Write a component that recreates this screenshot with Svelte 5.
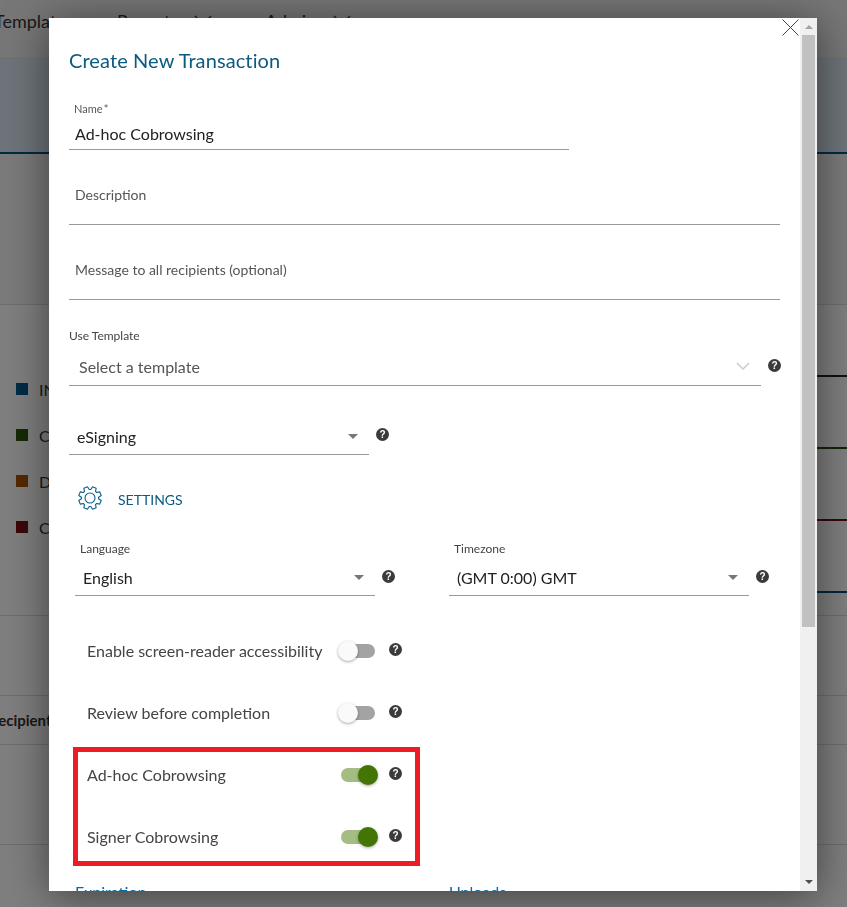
<script>
  let toggles = $state([
    { label: 'Enable screen-reader accessibility', on: false },
    { label: 'Review before completion', on: false }
  ])
  let cobrowse = $state([
    { label: 'Ad-hoc Cobrowsing', on: true },
    { label: 'Signer Cobrowsing', on: true }
  ])

  const legend = [
    { color: '#00568a', text: 'IN PROGRESS' },
    { color: '#2f5208', text: 'COMPLETED' },
    { color: '#a65200', text: 'DRAFT' },
    { color: '#7a0f18', text: 'CANCELLED' }
  ]
  const chartLines = ['#222', '#2b4d0c', '#70101a', '#004f7c']

  // 8 teeth cog outline, the teeth are a bit narrower at the tip
  const gearPoints = () => {
    const pts = []
    for (let i = 0; i < 8; i++) {
      const a = (i * Math.PI) / 4 + Math.PI / 8
      for (const [r, d] of [[8.6, -0.3], [11.5, -0.17], [11.5, 0.17], [8.6, 0.3]]) {
        pts.push((12 + r * Math.cos(a + d)).toFixed(2) + ',' + (12 + r * Math.sin(a + d)).toFixed(2))
      }
    }
    return pts.join(' ')
  }
</script>

{#snippet help()}
  <span class="help">?</span>
{/snippet}

{#snippet navChevron()}
  <svg class="nav-chevron" viewBox="0 0 18 10" width="18" height="10"><path d="M1 1l8 8 8-8" fill="none" stroke="#333" stroke-width="1.2" /></svg>
{/snippet}

{#snippet toggleRow(row)}
  <div class="toggle-row">
    <span class="toggle-label">{row.label}</span>
    <button class="toggle" class:on={row.on} aria-label={row.label} onclick={() => (row.on = !row.on)}>
      <span class="knob"></span>
    </button>
    {@render help()}
  </div>
{/snippet}

<div class="page">
  <nav class="topnav">
    <span class="nav-first">Templates</span>
    <span class="nav-reports">Reports</span>
    {@render navChevron()}
    <span class="nav-admin">Admin</span>
    {@render navChevron()}
  </nav>
  <div class="band"></div>
  <div class="spacer"></div>
  <section class="stats">
    <ul class="legend">
      {#each legend as item}
        <li><i style="background: {item.color}"></i>{item.text}</li>
      {/each}
    </ul>
    <div class="chart">
      {#each chartLines as c}
        <div class="chart-line" style="background: {c}"></div>
      {/each}
    </div>
  </section>
  <div class="blank"></div>
  <div class="table-head">Recipients</div>
  <div class="table-row"></div>
  <div class="overlay"></div>
</div>

<div class="modal">
  <div class="modal-body">
    <h2>Create New Transaction</h2>

    <div class="name-field">
      <label for="tx-name">Name *</label>
      <input id="tx-name" value="Ad-hoc Cobrowsing" />
    </div>

    <div class="text-field">Description</div>
    <div class="text-field">Message to all recipients (optional)</div>

    <div class="small-label template-label">Use Template</div>
    <div class="template-row">
      <div class="template-select">
        <span>Select a template</span>
        <svg class="chevron" viewBox="0 0 14 8" width="14" height="8"><path d="M1 1l6 6 6-6" fill="none" stroke="#ccc" stroke-width="1.5" /></svg>
      </div>
      {@render help()}
    </div>

    <div class="type-row">
      <div class="select">
        <span>eSigning</span><i class="caret"></i>
      </div>
      {@render help()}
    </div>

    <div class="settings-head">
      <svg viewBox="0 0 24 24" width="24" height="24" fill="none" stroke="#0b5f8a" stroke-width="1.1" stroke-linejoin="round">
        <polygon points={gearPoints()} />
        <circle cx="12" cy="12" r="5" />
      </svg>
      <span>SETTINGS</span>
    </div>

    <div class="settings-grid">
      <div>
        <div class="small-label">Language</div>
        <div class="select-row">
          <div class="select"><span>English</span><i class="caret"></i></div>
          {@render help()}
        </div>
      </div>
      <div>
        <div class="small-label">Timezone</div>
        <div class="select-row">
          <div class="select"><span>(GMT 0:00) GMT</span><i class="caret"></i></div>
          {@render help()}
        </div>
      </div>
    </div>

    <div class="toggles">
      {#each toggles as row}
        {@render toggleRow(row)}
      {/each}
      <div class="highlight">
        {#each cobrowse as row}
          {@render toggleRow(row)}
        {/each}
      </div>
    </div>

    <div class="bottom-links">
      <span>Expiration</span>
      <span>Uploads</span>
    </div>
  </div>

  <div class="scrollbar">
    <i class="arrow-up"></i>
    <div class="thumb"></div>
    <i class="arrow-down"></i>
  </div>

  <button class="close" aria-label="Close">
    <svg viewBox="0 0 17 17" width="17" height="17"><path d="M0.5 0.5l16 16M16.5 0.5l-16 16" stroke="#444" stroke-width="1" /></svg>
  </button>
</div>

<style>
  :global(body) {
    overflow: hidden;
    font-family: Lato, "Open Sans", sans-serif;
    color: #333;
  }

  .page {
    position: relative;
    height: 907px;
    overflow: hidden;
    background: #fff;
  }
  .overlay {
    position: absolute;
    inset: 0;
    background: rgba(0, 0, 0, 0.5);
  }

  .topnav {
    display: flex;
    align-items: center;
    height: 42px;
    padding-bottom: 16px;
    font-size: 18px;
    color: #333;
    background: #efefef;
    white-space: nowrap;
  }
  .nav-first {
    width: 123px;
    margin-left: -6px;
  }
  .nav-reports {
    width: 77px;
  }
  .nav-chevron {
    flex: none;
    margin-top: -2px;
  }
  .nav-admin {
    width: 68px;
    margin-left: 53px;
  }
  .band {
    height: 93px;
    background: #dde9f2;
    border-top: 1px solid #ddd;
    border-bottom: 2px solid #00568a;
  }
  .spacer {
    height: 150px;
    background: #f6f6f6;
    border-bottom: 1px solid #ddd;
  }
  .stats {
    display: flex;
    justify-content: space-between;
    height: 310px;
    background: #fff;
    border-bottom: 1px solid #ddd;
  }
  .legend {
    margin: 0;
    padding: 61px 0 0 16px;
    list-style: none;
    font-size: 16px;
  }
  .legend li {
    display: flex;
    align-items: center;
    gap: 11px;
    height: 46px;
    white-space: nowrap;
  }
  .legend i {
    width: 12px;
    height: 12px;
  }
  .chart {
    width: 30px;
    padding-top: 70px;
  }
  .chart-line {
    height: 2px;
    margin-bottom: 70px;
  }
  .blank {
    height: 79px;
    background: #fff;
    border-bottom: 1px solid #ddd;
  }
  .table-head {
    height: 48px;
    line-height: 48px;
    text-indent: -11px;
    font-size: 15px;
    font-weight: 700;
    border-bottom: 1px solid #ddd;
  }
  .table-row {
    height: 99px;
    border-bottom: 1px solid #ddd;
  }

  .modal {
    position: fixed;
    top: 18px;
    left: 49px;
    display: flex;
    width: 768px;
    height: 873px;
    background: #fff;
    box-shadow: 0 5px 40px rgba(0, 0, 0, 0.5);
  }
  .modal-body {
    flex: 1;
    min-width: 0;
    padding: 0 20px;
    overflow: hidden;
  }
  h2 {
    margin: 30px 0 0;
    font-size: 20px;
    font-weight: 400;
    line-height: 24px;
    letter-spacing: 0.1px;
    color: #0b5a80;
  }

  .name-field {
    width: 500px;
    margin-top: 30px;
    border-bottom: 1px solid #999;
  }
  .name-field label {
    display: block;
    padding-left: 5px;
    font-size: 11px;
    line-height: 14px;
    word-spacing: -1.5px;
    color: #555;
  }
  .name-field input {
    display: block;
    width: 100%;
    height: 33px;
    box-sizing: border-box;
    padding: 2px 6px 0;
    border: none;
    outline: none;
    background: none;
    font: inherit;
    font-size: 16px;
    color: #222;
  }
  .text-field {
    height: 39px;
    padding: 35px 0 0 6px;
    font-size: 14px;
    line-height: 20px;
    color: #555;
    border-bottom: 1px solid #999;
  }

  .small-label {
    font-size: 12px;
    line-height: 14px;
    color: #444;
    padding-left: 5px;
  }
  .template-label {
    margin-top: 29px;
    padding-left: 0;
  }
  .template-row {
    display: flex;
    align-items: center;
  }
  .template-select {
    display: flex;
    flex: none;
    align-items: center;
    justify-content: space-between;
    box-sizing: border-box;
    width: 692px;
    height: 43px;
    padding: 4px 11px 0 10px;
    font-size: 16px;
    color: #555;
    border-bottom: 1px solid #999;
  }
  .template-row .help {
    margin-left: 7px;
    margin-top: 1px;
  }
  .chevron {
    display: block;
  }

  .select {
    display: flex;
    align-items: center;
    justify-content: space-between;
    box-sizing: border-box;
    width: 300px;
    padding: 0 11px 0 8px;
    font-size: 16px;
    color: #222;
    border-bottom: 1px solid #999;
  }
  .caret {
    border-left: 5px solid transparent;
    border-right: 5px solid transparent;
    border-top: 5px solid #777;
  }
  .type-row {
    display: flex;
    align-items: center;
    margin-top: 38px;
  }
  .type-row .select {
    height: 31px;
    padding-bottom: 6px;
  }
  .type-row .help {
    margin-left: 7px;
    margin-top: -10px;
  }

  .settings-head {
    display: flex;
    align-items: center;
    gap: 16px;
    height: 24px;
    margin: 31px 0 0 9px;
    font-size: 14px;
    color: #0b5a80;
  }
  .settings-head span {
    margin-top: 2px;
  }

  .settings-grid {
    display: grid;
    grid-template-columns: 374px 1fr;
    margin: 32px 0 0 6px;
  }
  .select-row {
    display: flex;
    align-items: center;
  }
  .select-row .select {
    height: 40px;
    padding-top: 4px;
  }
  .select-row .help {
    margin-left: 7px;
    margin-top: 0;
  }

  .toggles {
    display: flex;
    flex-direction: column;
    gap: 16px;
    margin-top: 32px;
    padding-left: 18px;
  }
  .toggle-row {
    display: flex;
    align-items: center;
    height: 46px;
  }
  .toggle-label {
    width: 251px;
    margin-top: -2px;
    font-size: 16px;
    color: #444;
    white-space: nowrap;
  }
  .toggle {
    position: relative;
    width: 37px;
    height: 14px;
    padding: 0;
    border: none;
    background: none;
    cursor: pointer;
  }
  .toggle::before {
    content: "";
    position: absolute;
    top: 0;
    right: 0;
    left: 3px;
    height: 14px;
    border-radius: 7px;
    background: #a3a3a3;
  }
  .knob {
    position: absolute;
    top: -3px;
    left: 0;
    width: 20px;
    height: 20px;
    border-radius: 50%;
    background: #fafafa;
    box-shadow: 0 1px 3px rgba(0, 0, 0, 0.35);
  }
  .toggle.on::before {
    background: #a3bd83;
  }
  .toggle.on .knob {
    left: auto;
    right: -3px;
    background: #437505;
  }
  .toggle-row .help {
    margin-left: 14px;
    margin-top: -3px;
  }
  .highlight {
    display: flex;
    flex-direction: column;
    gap: 16px;
    width: 328px;
    margin: -5px 0 0 -14px;
    padding: 0 0 1px 9px;
    border: 5px solid #ed1c24;
  }

  .bottom-links {
    display: grid;
    grid-template-columns: 374px 1fr;
    margin: 16px 0 0 6px;
    font-size: 16px;
    line-height: 20px;
    color: #0a6aa0;
  }

  .help {
    display: inline-flex;
    align-items: center;
    justify-content: center;
    flex: none;
    width: 13px;
    height: 13px;
    border-radius: 50%;
    background: #3b3b3b;
    color: #fff;
    font-family: "Liberation Sans", sans-serif;
    font-size: 10px;
    font-weight: 700;
    line-height: 13px;
  }

  .scrollbar {
    position: relative;
    display: flex;
    flex-direction: column;
    align-items: center;
    flex: none;
    width: 17px;
    background: #f0f0f0;
  }
  .thumb {
    position: absolute;
    top: 17px;
    left: 2px;
    width: 13px;
    height: 592px;
    background: #c1c1c1;
  }
  .arrow-up,
  .arrow-down {
    position: absolute;
    border-left: 4px solid transparent;
    border-right: 4px solid transparent;
  }
  .arrow-up {
    top: 7px;
    border-bottom: 4px solid #a3a3a3;
  }
  .arrow-down {
    bottom: 7px;
    border-top: 4px solid #505050;
  }

  .close {
    position: absolute;
    top: 1px;
    left: 733px;
    width: 17px;
    height: 17px;
    padding: 0;
    border: none;
    background: none;
    cursor: pointer;
  }
  .close svg {
    display: block;
  }
</style>
